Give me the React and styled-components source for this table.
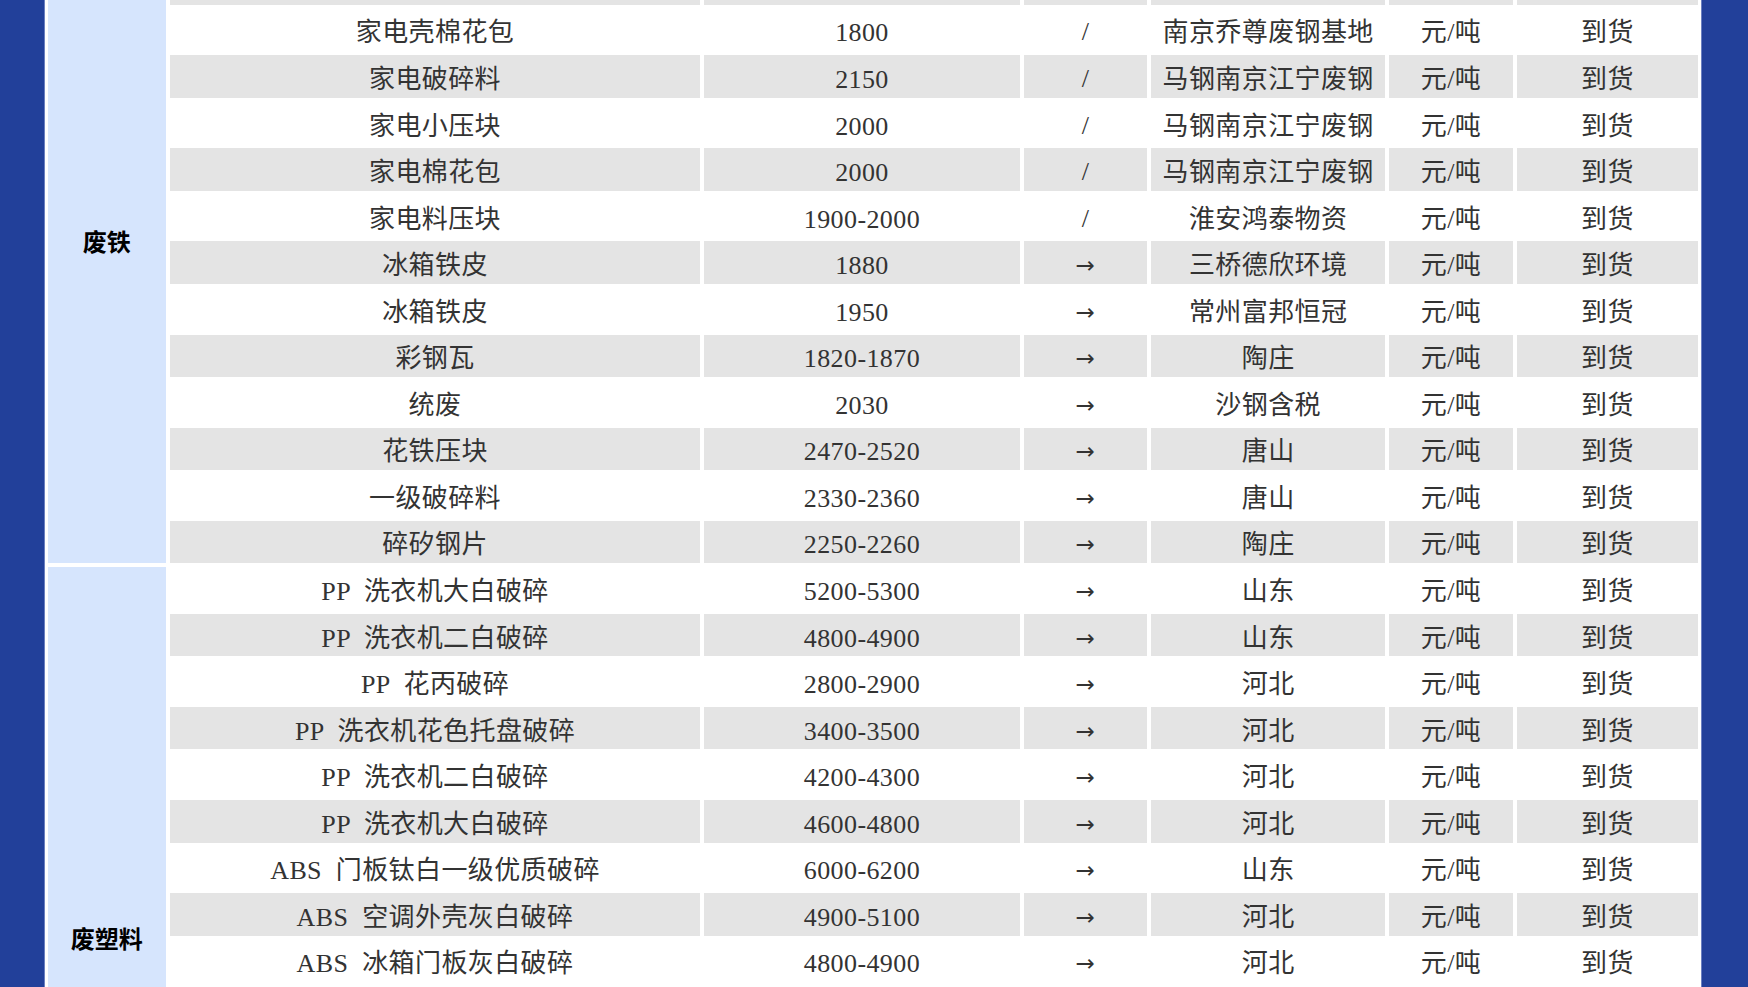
import React from "react";
import styled, { createGlobalStyle } from "styled-components";

const GlobalStyle = createGlobalStyle`
  html, body {
    margin: 0;
    padding: 0;
    height: 100%;
    overflow: hidden;
    background: #22409a;
  }
  #root {
    height: 100%;
  }
`;

const scrap = [
  { name: "家电壳棉花包", price: "1800", trend: "/", place: "南京乔尊废钢基地" },
  { name: "家电破碎料", price: "2150", trend: "/", place: "马钢南京江宁废钢" },
  { name: "家电小压块", price: "2000", trend: "/", place: "马钢南京江宁废钢" },
  { name: "家电棉花包", price: "2000", trend: "/", place: "马钢南京江宁废钢" },
  { name: "家电料压块", price: "1900-2000", trend: "/", place: "淮安鸿泰物资" },
  { name: "冰箱铁皮", price: "1880", trend: "→", place: "三桥德欣环境" },
  { name: "冰箱铁皮", price: "1950", trend: "→", place: "常州富邦恒冠" },
  { name: "彩钢瓦", price: "1820-1870", trend: "→", place: "陶庄" },
  { name: "统废", price: "2030", trend: "→", place: "沙钢含税" },
  { name: "花铁压块", price: "2470-2520", trend: "→", place: "唐山" },
  { name: "一级破碎料", price: "2330-2360", trend: "→", place: "唐山" },
  { name: "碎矽钢片", price: "2250-2260", trend: "→", place: "陶庄" },
];

const plastic = [
  { name: "PP  洗衣机大白破碎", price: "5200-5300", trend: "→", place: "山东" },
  { name: "PP  洗衣机二白破碎", price: "4800-4900", trend: "→", place: "山东" },
  { name: "PP  花丙破碎", price: "2800-2900", trend: "→", place: "河北" },
  { name: "PP  洗衣机花色托盘破碎", price: "3400-3500", trend: "→", place: "河北" },
  { name: "PP  洗衣机二白破碎", price: "4200-4300", trend: "→", place: "河北" },
  { name: "PP  洗衣机大白破碎", price: "4600-4800", trend: "→", place: "河北" },
  { name: "ABS  门板钛白一级优质破碎", price: "6000-6200", trend: "→", place: "山东" },
  { name: "ABS  空调外壳灰白破碎", price: "4900-5100", trend: "→", place: "河北" },
  { name: "ABS  冰箱门板灰白破碎", price: "4800-4900", trend: "→", place: "河北" },
];

const widths = [117.4, 529, 314.4, 123.4, 233, 123.7, 180.4];

function DataCells({ row, shaded }) {
  return (
    <>
      <Cell shaded={shaded}>{row.name}</Cell>
      <Cell shaded={shaded}>{row.price}</Cell>
      <Cell shaded={shaded}>
        <Tendencia arrow={row.trend === "→"}>{row.trend}</Tendencia>
      </Cell>
      <Cell shaded={shaded}>{row.place}</Cell>
      <Cell shaded={shaded}>元/吨</Cell>
      <Cell shaded={shaded}>到货</Cell>
    </>
  );
}

export default function App() {
  return (
    <>
      <GlobalStyle />
      <Pagina>
        <Folha>
          <Tabela>
            <colgroup>
              {widths.map((w, i) => (
                <col key={i} style={{ width: w + "px" }} />
              ))}
            </colgroup>
            <tbody>
              {/* linha anterior, quase toda fora da tela */}
              <LinhaCortada>
                <Categoria rowSpan={scrap.length + 1} labelTop={226}>
                  废铁
                </Categoria>
                {widths.slice(1).map((_, i) => (
                  <CellVazia key={i} shaded />
                ))}
              </LinhaCortada>
              {scrap.map((row, i) => (
                <Linha key={"s" + i}>
                  <DataCells row={row} shaded={i % 2 === 1} />
                </Linha>
              ))}
              {plastic.map((row, i) => (
                <Linha key={"p" + i}>
                  {i === 0 && (
                    <Categoria rowSpan={plastic.length + 1} labelTop={356}>
                      废塑料
                    </Categoria>
                  )}
                  <DataCells row={row} shaded={i % 2 === 1} />
                </Linha>
              ))}
              {/* próxima linha, já abaixo da tela */}
              <Linha>
                {widths.slice(1).map((_, i) => (
                  <CellVazia key={i} />
                ))}
              </Linha>
            </tbody>
          </Tabela>
        </Folha>
      </Pagina>
    </>
  );
}

/* ---------- ESTILOS ---------- */
const Pagina = styled.div`
  height: 100%;
  padding: 0 46px 0 44px;
  box-sizing: border-box;
  background: #22409a;
`;

const Folha = styled.div`
  height: 100%;
  background: #ffffff;
  overflow: hidden;
  box-shadow: inset 1px 0 0 #6b80c0, inset -1px 0 0 #6b80c0;
`;

const Tabela = styled.table`
  width: 100%;
  table-layout: fixed;
  border-collapse: separate;
  border-spacing: 4.6px 4px;
  margin-top: -4px;
`;

const Linha = styled.tr`
  height: 42.56px;
`;

const LinhaCortada = styled.tr`
  height: 4.7px;
`;

const Cell = styled.td`
  background: ${(p) => (p.shaded ? "#e4e4e4" : "#ffffff")};
  color: #333333;
  font-family: "Liberation Serif", "Noto Sans CJK SC", serif;
  font-size: 26px;
  letter-spacing: 0.4px;
  text-align: center;
  vertical-align: middle;
  white-space: pre;
  padding: 7px 0 0 0;
  line-height: 30px;
  overflow: hidden;
`;

const CellVazia = styled.td`
  background: ${(p) => (p.shaded ? "#e4e4e4" : "#ffffff")};
  padding: 0;
  line-height: 0;
  font-size: 0;
`;

const Tendencia = styled.span`
  display: inline-block;
  vertical-align: baseline;
  line-height: 1;
  position: relative;
  top: ${(p) => (p.arrow ? "-1px" : "-1px")};
  font-family: ${(p) =>
    p.arrow ? `"DejaVu Sans", sans-serif` : `"Liberation Serif", serif`};
  font-size: ${(p) => (p.arrow ? "23px" : "26px")};
`;

const Categoria = styled.td`
  background: #d6e5fd;
  color: #000000;
  font-family: "Noto Sans CJK SC", sans-serif;
  font-weight: 700;
  font-size: 24px;
  text-align: center;
  vertical-align: top;
  padding: ${(p) => p.labelTop}px 0 0 0;
  line-height: 29px;
`;
